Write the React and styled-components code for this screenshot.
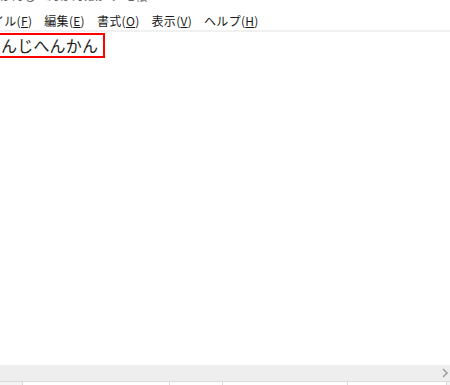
import React from "react";
import styled, { createGlobalStyle } from "styled-components";

const Global = createGlobalStyle`
  html, body { margin: 0; padding: 0; background: #ffffff; overflow: hidden; }
  body { font-family: "Noto Sans CJK JP", "Noto Sans", sans-serif; }
`;

const Window = styled.div`
  width: 450px;
  height: 385px;
  display: flex;
  flex-direction: column;
  background: #ffffff;
  overflow: hidden;
`;

const TitleStrip = styled.div`
  height: 11px;
  overflow: hidden;
  display: flex;
  align-items: flex-end;
`;

const TitleText = styled.div`
  font-size: 12px;
  line-height: 12px;
  color: #666;
  margin-bottom: 9px;
  white-space: nowrap;
`;

const MenuBar = styled.div`
  height: 19px;
  display: flex;
  align-items: center;
  gap: 12px;
  border-bottom: 2px solid #f0f0f0;
`;

const MenuItem = styled.div`
  font-size: 12px;
  line-height: 16px;
  color: #1a1a1a;
  white-space: nowrap;
  letter-spacing: 0.3px;
  &:first-child { margin-left: -8px; }
`;

const Key = styled.span`
  text-decoration: underline;
  text-underline-offset: 1px;
`;

const Editor = styled.div`
  flex: 1;
  padding-top: 1px;
  display: flex;
  flex-direction: column;
  align-items: flex-start;
`;

const Highlight = styled.div`
  height: 21px;
  border: 2px solid #ff0000;
  border-left: none;
  padding: 0 5px 0 1px;
  font-size: 16px;
  line-height: 21px;
  color: #222;
  white-space: nowrap;
  letter-spacing: 0.2px;
`;

const HScroll = styled.div`
  height: 16px;
  background: #eeeeee;
  display: flex;
  align-items: center;
  justify-content: flex-end;
  padding-right: 1px;
  border-bottom: 1px solid #dadada;
`;

const StatusBar = styled.div`
  height: 3px;
  display: flex;
  background: #f4f4f4;
`;

const StatusCell = styled.div`
  width: ${(p) => p.w}px;
  flex-shrink: 0;
  border-right: 1px solid #d8d8d8;
  background: ${(p) => (p.white ? "#ffffff" : "#f4f4f4")};
`;

const Chevron = () => (
  <svg width="8" height="10" viewBox="0 0 8 10">
    <path d="M2 1 L6 5 L2 9" fill="none" stroke="#a0a0a0" strokeWidth="1.6" />
  </svg>
);

const menus = [
  ["イル", "F"],
  ["編集", "E"],
  ["書式", "O"],
  ["表示", "V"],
  ["ヘルプ", "H"],
];

export default function App() {
  return (
    <>
      <Global />
      <Window>
        <TitleStrip>
          <TitleText>かんじへんかん.txt - メモ帳</TitleText>
        </TitleStrip>
        <MenuBar>
          {menus.map(([label, key]) => (
            <MenuItem key={key}>
              {label}(<Key>{key}</Key>)
            </MenuItem>
          ))}
        </MenuBar>
        <Editor>
          <Highlight>んじへんかん</Highlight>
        </Editor>
        <HScroll>
          <Chevron />
        </HScroll>
        <StatusBar>
          <StatusCell w={22} />
          <StatusCell w={146} white />
          <StatusCell w={52} white />
          <StatusCell w={124} white />
          <StatusCell w={98} white />
        </StatusBar>
      </Window>
    </>
  );
}
